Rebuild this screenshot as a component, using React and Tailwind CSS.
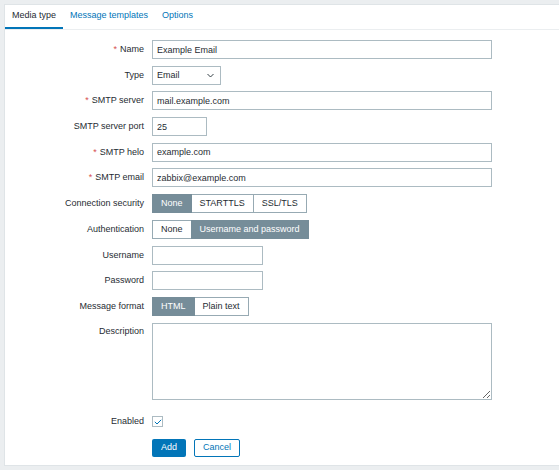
import clsx from 'clsx';

const font = { fontFamily: '"Liberation Sans", Arial, sans-serif' };

const Label = ({ children, required }) => (
  <div className="w-[139px] shrink-0 text-right text-[#1f2c33]">
    {required && <span className="text-[#d64e4e] mr-[3px]">*</span>}
    {children}
  </div>
);

const Row = ({ label, required, children, top }) => (
  <div className={clsx('flex gap-[8px]', top ? 'items-start' : 'items-center min-h-[19px]')}>
    <div className={clsx(top && 'pt-[4px] flex')}>
      <Label required={required}>{label}</Label>
    </div>
    {children}
  </div>
);

const TextInput = ({ value = '', width }) => (
  <input
    readOnly
    value={value}
    className={clsx(
      'h-[19px] border border-[#acbbc2] bg-white px-[4px] text-[9px] text-[#1f2c33] outline-none',
      width
    )}
    style={font}
  />
);

const Segmented = ({ options, active }) => (
  <div className="flex h-[19px]">
    {options.map((opt, idx) => (
      <div
        key={opt}
        className={clsx(
          'flex items-center justify-center border px-[8px]',
          idx > 0 && '-ml-px',
          idx === active
            ? 'bg-[#768d99] border-[#768d99] text-white z-10'
            : 'bg-white border-[#97aab3] text-[#1f2c33]'
        )}
      >
        {opt}
      </div>
    ))}
  </div>
);

export default function App() {
  return (
    <div
      className="w-[559px] h-[470px] bg-[#ebeef0] pt-[4px] pl-[4px] overflow-hidden text-[9px] leading-none"
      style={font}
    >
      <div className="h-[462px] bg-white border-l border-y border-[#dfe4e7]">
        <div className="flex h-[25px] border-b border-[#ebeef0]">
          <div className="flex items-center px-[7px] pb-[1px] text-[#1f2c33] border-b-2 border-[#0275b8]">
            Media type
          </div>
          <div className="flex items-center px-[7px] pb-[3px] text-[#0275b8]">Message templates</div>
          <div className="flex items-center px-[7px] pb-[3px] text-[#0275b8]">Options</div>
        </div>

        <div className="flex flex-col gap-[6.7px] pt-[10px]">
          <Row label="Name" required>
            <TextInput value="Example Email" width="w-[340px]" />
          </Row>
          <Row label="Type">
            <div className="flex h-[19px] w-[69px] items-center justify-between border border-[#acbbc2] px-[4px] text-[#1f2c33]">
              <span>Email</span>
              <svg width="7" height="5" viewBox="0 0 7 5" className="mr-[2px]">
                <path d="M0.5 1 L3.5 4 L6.5 1" fill="none" stroke="#1f2c33" strokeWidth="0.9" />
              </svg>
            </div>
          </Row>
          <Row label="SMTP server" required>
            <TextInput value="mail.example.com" width="w-[340px]" />
          </Row>
          <Row label="SMTP server port">
            <TextInput value="25" width="w-[55px]" />
          </Row>
          <Row label="SMTP helo" required>
            <TextInput value="example.com" width="w-[340px]" />
          </Row>
          <Row label="SMTP email" required>
            <TextInput value="zabbix@example.com" width="w-[340px]" />
          </Row>
          <Row label="Connection security">
            <Segmented options={['None', 'STARTTLS', 'SSL/TLS']} active={0} />
          </Row>
          <Row label="Authentication">
            <Segmented options={['None', 'Username and password']} active={1} />
          </Row>
          <Row label="Username">
            <TextInput width="w-[111px]" />
          </Row>
          <Row label="Password">
            <TextInput width="w-[111px]" />
          </Row>
          <Row label="Message format">
            <Segmented options={['HTML', 'Plain text']} active={0} />
          </Row>
          <Row label="Description" top>
            <textarea
              readOnly
              className="h-[77px] w-[340px] border border-[#acbbc2] outline-none"
            />
          </Row>
          <div className="mt-[6px]">
            <Row label="Enabled">
              <div className="flex h-[11px] w-[11px] items-center justify-center border border-[#acbbc2]">
                <svg width="8" height="6" viewBox="0 0 8 6">
                  <path d="M0.8 2.8 L3 5 L7.2 0.8" fill="none" stroke="#0275b8" strokeWidth="1" />
                </svg>
              </div>
            </Row>
          </div>
          <div className="flex gap-[8px] pl-[147px] mt-[1px]">
            <div className="flex h-[18px] w-[34px] items-center justify-center rounded-[2px] bg-[#0275b8] text-white">
              Add
            </div>
            <div className="flex h-[18px] w-[46px] items-center justify-center rounded-[2px] border border-[#0275b8] text-[#0275b8]">
              Cancel
            </div>
          </div>
        </div>
      </div>
    </div>
  );
}
